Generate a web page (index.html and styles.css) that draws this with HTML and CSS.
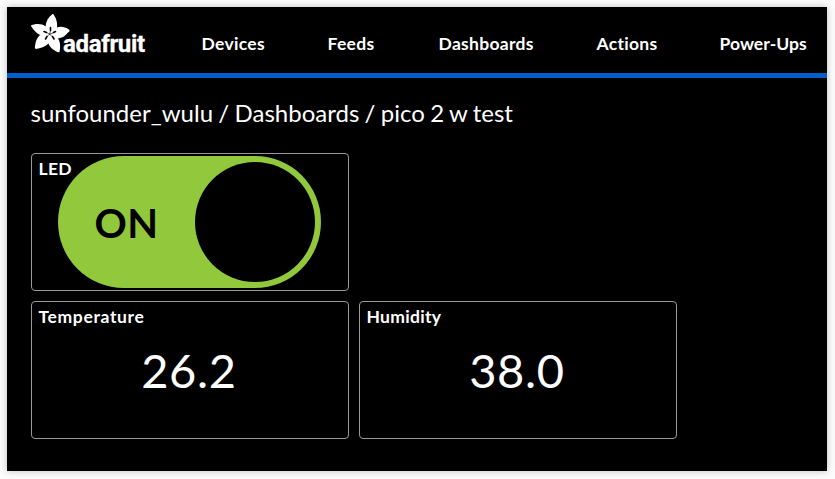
FILE: index.html
```html
<!DOCTYPE html>
<html lang="en">
<head>
<meta charset="utf-8">
<title>pico 2 w test</title>
<link rel="stylesheet" href="styles.css">
</head>
<body>
<div class="window">
  <header class="header">
    <div class="logo">
      <svg class="flower" width="41" height="41" viewBox="0 0 41 41" aria-hidden="true">
        <path fill="#fff" d="M21.500 0Q22.500 -.5 23.500 2C25.500 5 26.500 9 26 13.500C29 12 34 12.500 38 15.500Q39.500 17 37 18.500C34.500 22 31 24 27 24.500C29.500 28 29.500 33 28.500 38Q27.500 39 24.500 37C21 35 18.500 32.500 17.500 29.500C14 33 9.500 34 5 35Q3.500 35 4 32C4.500 27.500 6 23.500 9 21C5 19 2 15.500 0 12Q0 10.500 3 10.500C7.500 9.500 11.500 10 14.500 12.500C15 7 17.500 3 21.500 0Z"/>
        <g stroke="#000" stroke-width="1.600" stroke-linecap="round">
          <path d="M19.500 13.500V16.500M13 17.500L15.500 18.500M22.500 18.500L24.500 17.500M14.500 25L16 22.500M21.500 22.500L23 25"/>
          <path stroke-width=".6" d="M18.700 20.200L19.400 17M18.700 20.200L15.500 18.500M18.700 20.200L22 19M18.700 20.200L16 22.500M18.700 20.200L21 22.500"/>
        </g>
      </svg>
      <span class="wordmark">adafruit</span>
    </div>
    <nav class="nav">
      <a class="devices">Devices</a>
      <a class="feeds">Feeds</a>
      <a class="dashboards">Dashboards</a>
      <a class="actions">Actions</a>
      <a class="power-ups">Power-Ups</a>
    </nav>
  </header>
  <main class="main">
    <h1 class="breadcrumb">sunfounder_wulu / Dashboards / pico 2 w test</h1>
    <div class="grid">
      <section class="card card-toggle">
        <h2 class="title">LED</h2>
        <div class="toggle"><span class="state">ON</span><span class="knob"></span></div>
      </section>
      <section class="card">
        <h2 class="title temperature">Temperature</h2>
        <div class="value">26.2</div>
      </section>
      <section class="card">
        <h2 class="title humidity">Humidity</h2>
        <div class="value">38.0</div>
      </section>
    </div>
  </main>
</div>
</body>
</html>
```
FILE: styles.css
```css
* { box-sizing: border-box; }
body {
  margin: 0;
  padding: 7px 8px 8px 7px;
  height: 479px;
  overflow: hidden;
  background: #fcfcfc;
  font-family: Lato, "Open Sans", sans-serif;
  font-variant-ligatures: none;
  color: #fff;
}
.window {
  height: 464px;
  background: #000;
  box-shadow: 0 0 7px rgba(0, 0, 0, .25);
}
.header {
  display: flex;
  height: 71px;
  padding-left: 24px;
  border-bottom: 5px solid #0060c7;
}
.logo {
  display: flex;
  width: 170px;
  padding-top: 7px;
}
.flower { flex: none; }
.wordmark {
  margin: 16px 0 0 -9px;
  font: 700 24px/28px Roboto, sans-serif;
  letter-spacing: -.35px;
  -webkit-text-stroke: .3px #fff;
}
.nav {
  display: grid;
  grid-template-columns: 126px 111px 158px 123px 100px;
  font-size: 17.5px;
  font-weight: 700;
  line-height: 22px;
  letter-spacing: .3px;
  padding: 26px 0 0 .5px;
}
.power-ups { letter-spacing: .05px; }
.main { padding: 20px 24px 0; }
.breadcrumb {
  margin: 0 0 26px -.5px;
  font-size: 24px;
  font-weight: 400;
  line-height: 29px;
  word-spacing: -.8px;
  white-space: nowrap;
}
.grid {
  display: grid;
  grid-template-columns: 318px 318px;
  grid-auto-rows: 138px;
  gap: 10px;
}
.card {
  position: relative;
  border: 1px solid #999;
  border-radius: 4px;
}
.card-toggle {
  grid-column: 1 / -1;
  width: 318px;
  padding: 2px 0 0 26px;
}
.title {
  margin: 0;
  padding: 4px 6.5px 0;
  font-size: 17.5px;
  font-weight: 700;
  line-height: 22px;
  letter-spacing: .3px;
}
.temperature { letter-spacing: .65px; }
.card-toggle .title {
  position: absolute;
  left: 0;
  top: 0;
  z-index: 1;
}
.toggle {
  display: flex;
  align-items: center;
  justify-content: space-between;
  width: 263px;
  height: 132px;
  padding: 0 6px 0 36.5px;
  border-radius: 66px;
  background: #92c83b;
}
.state {
  padding-top: 1px;
  color: #000;
  font-size: 40px;
  font-weight: 700;
  line-height: 48px;
  letter-spacing: .5px;
}
.knob {
  width: 120px;
  height: 120px;
  border-radius: 50%;
  background: #000;
}
.value {
  margin: 14px 2px 0 0;
  font-size: 47px;
  line-height: 56px;
  letter-spacing: .7px;
  text-align: center;
}
```
